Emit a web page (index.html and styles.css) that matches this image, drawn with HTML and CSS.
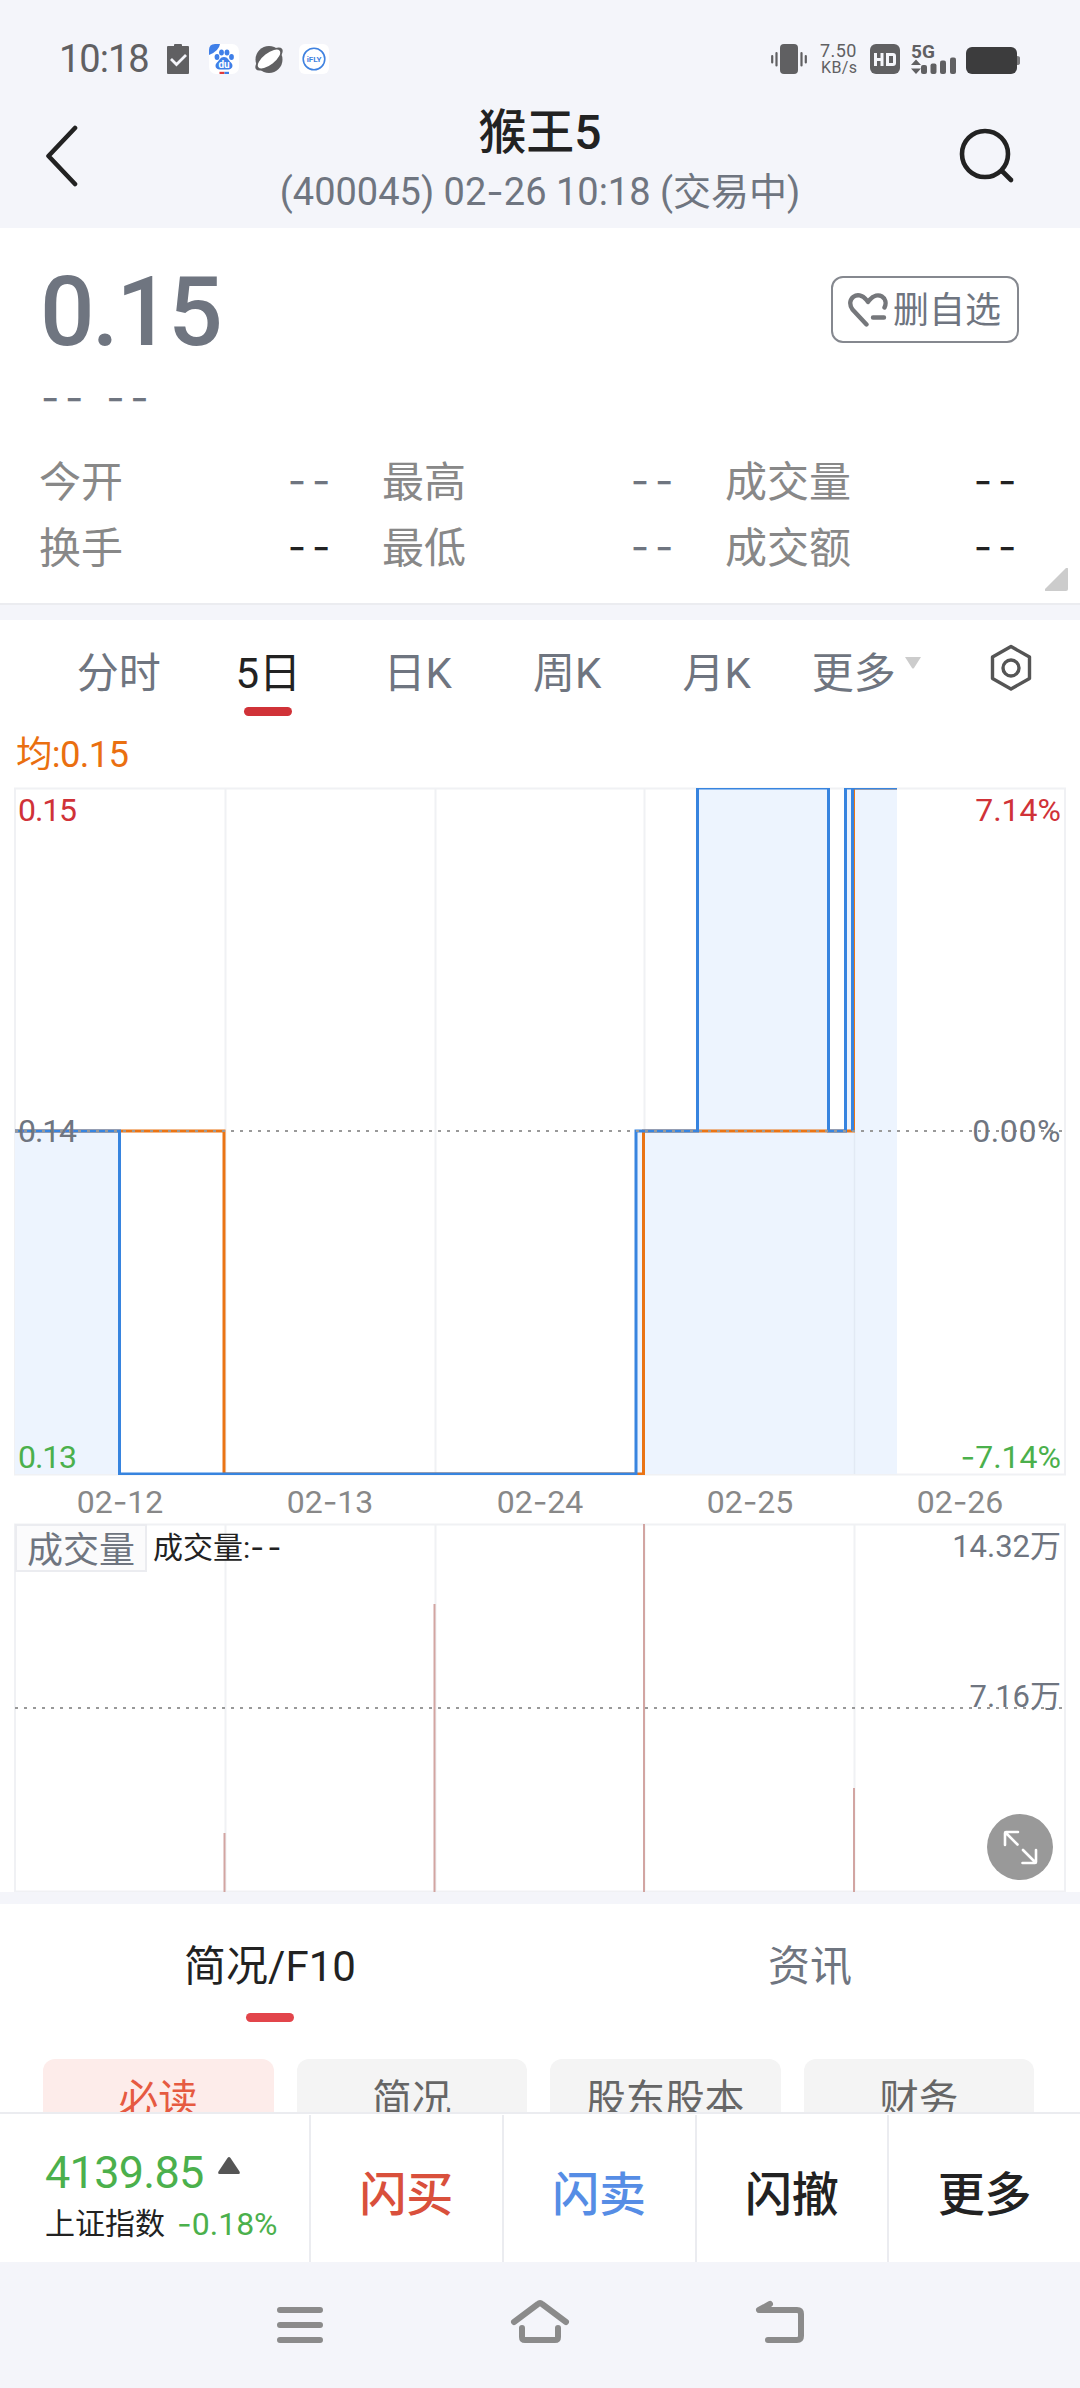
FILE: index.html
```html
<!DOCTYPE html>
<html lang="zh-CN">

<head>
    <meta charset="UTF-8">
    <meta name="viewport" content="width=device-width, initial-scale=1.0">
    <title>猴王5</title>

    <link rel="stylesheet" href="styles.css">
</head>

<body>
    <div class="status-bar">
        <div class="status-left">
            <span class="clock">10:18</span>
            <svg class="status-icon clipboard" viewBox="0 0 22 30">
                <path d="M1 2h6v-1q0-1 1-1h6q1 0 1 1v1h6q1 0 1 1v26q0 1-1 1H1q-1 0-1-1V3q0-1 1-1z" fill="#606062" />
                <path d="M4 15l5.5 5.500L19 11" fill="none" stroke="#f4f5fa" stroke-width="2.800" />
            </svg>
            <svg class="status-icon" viewBox="0 0 30 30">
                <rect width="30" height="30" rx="7" fill="#fff" />
                <path d="M0 11V6q0-6 6-6h5q-1 7-11 11z" fill="#3f7fe8" />
                <g fill="#3f7fe8">
                    <ellipse cx="8" cy="13" rx="2.400" ry="3" />
                    <ellipse cx="12.500" cy="8.500" rx="2.400" ry="3" />
                    <ellipse cx="18" cy="8.500" rx="2.400" ry="3" />
                    <ellipse cx="22.500" cy="13" rx="2.400" ry="3" />
                    <path d="M15 13c4 0 4.500 3.500 7 5.500c3 3 1 7-2.500 7h-9c-3.500 0-5.500-4-2.500-7c2.500-2 3-5.500 7-5.500z" />
                </g>
                <text x="15" y="24" class="du">du</text>
                <path d="M10.500 29h5" stroke="#e03a3a" stroke-width="2.400" />
                <path d="M15.500 29h4.500" stroke="#3f7fe8" stroke-width="2.400" />
            </svg>
            <svg class="status-icon" viewBox="0 0 30 30">
                <circle cx="15" cy="15.500" r="13.500" fill="#606062" />
                <ellipse cx="15" cy="15" rx="16.500" ry="6.800" transform="rotate(-38 15 15)" fill="#606062" />
                <ellipse cx="15" cy="15" rx="13.500" ry="5.800" transform="rotate(-38 15 15)" fill="#fff" />
            </svg>
            <svg class="status-icon" viewBox="0 0 30 30">
                <rect width="30" height="30" rx="6" fill="#fff" />
                <circle cx="15" cy="15" r="10.800" fill="none" stroke="#3f82e0" stroke-width="1.600" />
                <text x="15" y="18" class="ifly">iFLY</text>
            </svg>
        </div>
        <div class="status-right">
            <svg class="vibrate" viewBox="0 0 36 30">
                <rect x="9" width="18" height="30" rx="4" />
                <path d="M1.200 12v6.500M5.500 9v12.500M30.500 9v12.500M34.800 12v6.500" stroke="#606062" stroke-width="2.200" stroke-linecap="round" />
            </svg>
            <span class="speed"><b>7.50</b><i>KB/s</i></span>
            <svg class="hd" viewBox="0 0 30 30">
                <rect width="30" height="30" rx="6" />
                <path d="M5.500 9v13M12 9v13M5.500 15.500h6.500M17.500 10.500h5.500q1.500 0 1.500 1.500v7q0 1.500-1.500 1.500h-5.500z" fill="none" stroke="#f4f5fa" stroke-width="3" />
            </svg>
            <svg class="signal" viewBox="0 0 46 30">
                <text x="0" y="14" class="five-g">5G</text>
                <path d="M5 15.500l5 5.500H0zM5 30l5-5.500H0z" />
                <rect x="10" y="21" width="6" height="9" rx="2" />
                <rect x="19.500" y="19.500" width="6" height="10.500" rx="2" />
                <rect x="29" y="16.500" width="6" height="13.500" rx="2" />
                <rect x="39" y="13.500" width="6" height="16.500" rx="2" />
            </svg>
            <svg class="battery" viewBox="0 0 54 27">
                <path d="M51 9q3 0 3 2v5q0 2-3 2z" fill="#7a7a7c" />
                <rect width="51" height="27" rx="6" fill="#3c3c3d" />
            </svg>
        </div>
    </div>

    <header class="header">
        <svg class="back" viewBox="0 0 34 62">
            <path d="M30 3L3.500 31L30 59" />
        </svg>
        <div class="title">
            <h1>猴王5</h1>
            <p>(400045) 02<span class="hyphen">-</span>26 10:18 (交易中)</p>
        </div>
        <svg class="search" viewBox="0 0 56 56">
            <circle cx="26" cy="26" r="23" />
            <path d="M43.500 43.500L52 52" />
        </svg>
    </header>

    <section class="quote">
        <div class="quote-top">
            <div class="price">0.15</div>
            <button class="unfollow">
                <svg viewBox="0 0 40 36">
                    <path d="M18.500 32.500L4.500 17.500C-3 7 10-3 18.500 8L20 10L21.500 8C30-2 41 6 36.500 15.500M25 25.500H36" />
                </svg>
                <span>删自选</span>
            </button>
        </div>
        <div class="change dashes"><span>--</span><span>--</span></div>
        <dl class="stats">
            <div><dt>今开</dt><dd class="dashes">--</dd></div>
            <div><dt>最高</dt><dd class="dashes">--</dd></div>
            <div><dt>成交量</dt><dd class="dashes dark">--</dd></div>
            <div><dt>换手</dt><dd class="dashes dark">--</dd></div>
            <div><dt>最低</dt><dd class="dashes">--</dd></div>
            <div><dt>成交额</dt><dd class="dashes dark">--</dd></div>
        </dl>
        <svg class="corner" viewBox="0 0 23 23">
            <path d="M21 0q2-1 2 1v20q0 2-2 2H1q-2 0-1-2z" />
        </svg>
    </section>

    <nav class="periods">
        <a>分时</a>
        <a class="active">5日</a>
        <a>日K</a>
        <a>周K</a>
        <a>月K</a>
        <a class="more">更多
            <svg viewBox="0 0 16 12">
                <path d="M0 0h16L9 11q-1 1-2 0z" />
            </svg>
        </a>
        <svg class="settings" viewBox="0 0 44 48">
            <path d="M22 2.500L40.500 13v21.500L22 45L3.500 34.500V13z" />
            <circle cx="22" cy="24" r="8" />
        </svg>
    </nav>

    <p class="average">均:0.15</p>

    <svg class="chart" viewBox="0 0 1080 740">
        <clipPath id="plot">
            <rect x="15" y="8" width="1050" height="687" />
        </clipPath>
        <g class="grid">
            <rect x="15" y="8.500" width="1050" height="686" />
            <path d="M225.500 8v686M435.500 8v686M644.500 8v686M854.500 8v686" />
        </g>
        <g clip-path="url(#plot)">
            <path class="area" d="M15 351H119V694H15zM636 694V351H697V8H829V351H845V8H897V694z" />
            <path class="area-grid" d="M854.500 351v343" />
            <path class="avg-line" d="M15 351H224V694H643.500V351H853.500V8H897" />
            <path class="price-line" d="M15 351H119.500V694H636V351H697.500V8H828.500V351H845.500V8H852.500V351V8H897" />
        </g>
        <path class="dotted" d="M15 351H1065" />
        <text class="label tight up" x="18" y="41">0.15</text>
        <text class="label up end" x="1061" y="41">7.14%</text>
        <text class="label tight" x="18" y="362">0.14</text>
        <text class="label wide end" x="1061" y="362">0.00%</text>
        <text class="label tight down" x="18" y="688">0.13</text>
        <text class="label down end" x="1061" y="688"><tspan class="hyphen">-</tspan>7.14%</text>
        <text class="label date" x="120" y="733">02<tspan class="hyphen">-</tspan>12</text>
        <text class="label date" x="330" y="733">02<tspan class="hyphen">-</tspan>13</text>
        <text class="label date" x="540" y="733">02<tspan class="hyphen">-</tspan>24</text>
        <text class="label date" x="750" y="733">02<tspan class="hyphen">-</tspan>25</text>
        <text class="label date" x="960" y="733">02<tspan class="hyphen">-</tspan>26</text>
    </svg>

    <div class="volume">
        <svg class="chart" viewBox="0 0 1080 372">
            <g class="grid">
                <rect x="15" y="4.500" width="1050" height="367" />
                <path d="M225.500 4v368M435.500 4v368M644.500 4v368M854.500 4v368" />
            </g>
            <path class="dotted" d="M15 188H1065" />
            <path class="bars" d="M224.500 372V313M434.500 372V84M644 372V4M854 372V268" />
            <text class="label amount end" x="1061" y="37">14.32万</text>
            <text class="label amount end" x="1061" y="186.500">7.16万</text>
        </svg>
        <div class="indicator">
            <span class="indicator-name">成交量</span>
            <span class="indicator-value">成交量:<span class="small-dashes">--</span></span>
        </div>
        <svg class="expand" viewBox="0 0 66 66">
            <circle cx="33" cy="33" r="33" />
            <path d="M18 31V19q0-1 1-1H31M19 19L30.500 30.500M36 36L47.500 47.500M35.500 49H48q1 0 1-1V36" />
        </svg>
    </div>

    <section class="info">
        <nav class="info-tabs">
            <a class="active">简况/F10</a>
            <a>资讯</a>
        </nav>
        <div class="chips">
            <span class="selected">必读</span>
            <span>简况</span>
            <span>股东股本</span>
            <span>财务</span>
        </div>
    </section>

    <footer class="actions">
        <div class="index">
            <div class="index-value">4139.85
                <svg viewBox="0 0 22 17">
                    <path d="M9.500 1q1.500-2 3 0L21.500 14.500q1 2.500-1 2.500h-19q-2 0-1-2.500z" />
                </svg>
            </div>
            <div class="index-name"><span>上证指数</span><em><span class="hyphen">-</span>0.18%</em></div>
        </div>
        <a class="buy">闪买</a>
        <a class="sell">闪卖</a>
        <a>闪撤</a>
        <a>更多</a>
    </footer>

    <div class="system-nav">
        <svg viewBox="0 0 60 50">
            <path d="M10 13H50M10 28H50M10 43H50" />
        </svg>
        <svg viewBox="0 0 60 50">
            <path d="M4 25L28 7q2-2 4 0L56 25M12 31v9q0 3 3 3h30q3 0 3-3v-9" />
        </svg>
        <svg viewBox="0 0 60 50">
            <path d="M20 7L9 13H47q4 0 4 4V39q0 4-4 4H18" />
        </svg>
    </div>
</body>

</html>
```
FILE: styles.css
```css
* {
    --ink: #222;
    --slate: #6f7580;
    --page: #f4f5fa;
    --line: #ebecf0;
    --red: #d03238;
    --green: #4bb04c;

    box-sizing: border-box;
}

body {
    background-color: var(--page);
    color: var(--slate);
    font-family: Roboto, "Noto Sans CJK SC", sans-serif;
    height: 2388px;
    margin: 0;
    overflow: hidden;
    width: 1080px;
}

h1,
p,
dl,
dd {
    margin: 0;
}

svg {
    display: block;
    flex: none;
}

.status-bar {
    display: flex;
    height: 104px;
    justify-content: space-between;
    padding: 44px 60px 0 59px;
}

.status-left,
.status-right {
    align-items: center;
    color: #606062;
    display: flex;
    height: 30px;
}

.status-left {
    gap: 15px;
}

.clock {
    font-size: 38px;
    letter-spacing: -1px;
    width: 93px;
}

.status-icon {
    height: 30px;
    width: 30px;
}

.clipboard {
    margin-right: 5px;
    width: 22px;
}

.du {
    fill: #fff;
    font-size: 10px;
    font-weight: 700;
    text-anchor: middle;
}

.ifly {
    fill: #3f82e0;
    font-size: 8px;
    font-weight: 700;
    text-anchor: middle;
}

.status-right {
    fill: #606062;
}

.vibrate {
    height: 30px;
    width: 36px;
}

.speed {
    display: flex;
    flex-direction: column;
    margin-left: 13px;
    width: 37px;
}

.speed b,
.speed i {
    font-style: normal;
    font-weight: 400;
    line-height: 15px;
}

.speed b {
    font-size: 18px;
    letter-spacing: 0.4px;
}

.speed i {
    font-size: 16px;
    letter-spacing: 0.4px;
    margin-top: 2px;
    padding-left: 1px;
}

.hd {
    height: 30px;
    margin-left: 13px;
    width: 30px;
}

.signal {
    height: 30px;
    margin-left: 11px;
    overflow: visible;
    width: 46px;
}

.five-g {
    font-size: 19px;
    font-weight: 700;
}

.battery {
    height: 27px;
    margin: 3px 0 0 9px;
    width: 54px;
}

.header {
    align-items: flex-start;
    display: grid;
    grid-template-columns: 120px 1fr 120px;
    height: 124px;
}

.back,
.search {
    fill: none;
    stroke: var(--ink);
    stroke-linecap: round;
    stroke-linejoin: round;
    stroke-width: 4.6px;
}

.back {
    height: 62px;
    margin: 21px 0 0 45px;
    width: 34px;
}

.search {
    height: 56px;
    margin: 24px 65px 0 0;
    justify-self: end;
    width: 56px;
}

.title {
    padding-top: 1px;
    text-align: center;
}

.title h1 {
    color: var(--ink);
    font-size: 48px;
    font-weight: 500;
    line-height: 56px;
}

.title p {
    font-size: 38px;
    line-height: 61px;
    white-space: nowrap;
}

.hyphen {
    font-family: Inter, sans-serif;
}

.quote {
    background-color: white;
    border-bottom: 2px solid var(--line);
    height: 377px;
    padding: 48px 61px 0 40px;
    position: relative;
}

.quote-top {
    display: flex;
    height: 97px;
    justify-content: space-between;
}

.price {
    font-size: 96px;
    font-weight: 500;
    letter-spacing: -2.5px;
    line-height: 73px;
}

.unfollow {
    align-items: center;
    background: none;
    border: 2px solid #85888f;
    border-radius: 12px;
    color: inherit;
    display: flex;
    font: 36px "Noto Sans CJK SC", sans-serif;
    gap: 5px;
    height: 67px;
    padding: 0 0 0 15px;
    width: 188px;
}

.unfollow span {
    margin-top: -6px;
}

.unfollow svg {
    fill: none;
    height: 36px;
    stroke: #75777b;
    stroke-linecap: round;
    stroke-linejoin: round;
    stroke-width: 4.4px;
    width: 40px;
}

.dashes {
    font: 40px/50px Inter, sans-serif;
    letter-spacing: 5.7px;
}

.change {
    display: flex;
    gap: 17px;
    padding-left: 1px;
}

.stats {
    column-gap: 53px;
    display: grid;
    font-size: 42px;
    grid-template-columns: repeat(3, 290px);
    line-height: 66px;
    margin-top: 27px;
    margin-left: -1px;
}

.stats div {
    display: flex;
    justify-content: space-between;
}

.stats dt {
    color: #888;
}

.stats dd {
    height: 66px;
    line-height: 61px;
    margin-right: -7px;
}

.stats .dark {
    color: var(--ink);
}

.corner {
    bottom: 12px;
    fill: #ccc;
    height: 23px;
    position: absolute;
    right: 12px;
    width: 23px;
}

.periods {
    background-color: white;
    display: flex;
    font-size: 42px;
    height: 115px;
    line-height: 107px;
    margin-top: 15px;
    padding-left: 44px;
}

.periods a {
    display: flex;
    justify-content: center;
    width: 149.5px;
}

.periods .active,
.info-tabs .active {
    color: var(--ink);
    position: relative;
}

.periods .active::after,
.info-tabs .active::after {
    background-color: var(--red);
    border-radius: 5px;
    content: "";
    height: 9px;
    left: calc(50% - 24px);
    position: absolute;
    top: 87px;
    width: 48px;
}

.more svg {
    fill: #ccc;
    height: 12px;
    margin: 37px 0 0 9px;
    width: 16px;
}

.settings {
    fill: none;
    height: 48px;
    margin: 24px 0 0 48px;
    stroke: #555;
    stroke-linejoin: round;
    stroke-width: 3.4px;
    width: 44px;
}

.average {
    background-color: white;
    color: #ea6f10;
    font-size: 36.5px;
    height: 45px;
    letter-spacing: -0.7px;
    line-height: 40px;
    padding-left: 16px;
}

.chart {
    background-color: white;
    width: 1080px;
}

.grid {
    fill: none;
    stroke: #f0f1f4;
    stroke-width: 2px;
}

.area {
    fill: #edf4fe;
}

.area-grid {
    stroke: #e2e9f4;
    stroke-width: 1.5px;
}

.price-line,
.avg-line {
    fill: none;
    stroke: #3784df;
    stroke-width: 3px;
}

.avg-line {
    stroke: #ea7414;
}

.dotted {
    stroke: #999;
    stroke-dasharray: 3 6;
    stroke-width: 2px;
}

.label {
    fill: var(--slate);
    font-size: 32px;
}

.tight {
    letter-spacing: -1.1px;
}

.wide {
    letter-spacing: 0.6px;
}

.amount {
    font-size: 31px;
}

.up {
    fill: var(--red);
}

.down {
    fill: var(--green);
}

.end {
    text-anchor: end;
}

.date {
    fill: #888;
    text-anchor: middle;
}

.volume {
    position: relative;
}

.bars {
    stroke: #d2a5a2;
    stroke-width: 2px;
}

.indicator {
    display: flex;
    gap: 6px;
    left: 15px;
    position: absolute;
    top: 4px;
}

.indicator-name {
    background-color: #fbfbfc;
    border: 2px solid var(--line);
    font-size: 36px;
    height: 48px;
    line-height: 50px;
    text-align: center;
    width: 132px;
}

.indicator-value {
    color: var(--ink);
    font-size: 30px;
    line-height: 47px;
}

.small-dashes {
    font-family: Inter, sans-serif;
    letter-spacing: 3.5px;
}

.expand {
    bottom: 12px;
    fill: #999;
    height: 66px;
    position: absolute;
    right: 27px;
    width: 66px;
}

.expand path {
    fill: none;
    stroke: white;
    stroke-linecap: round;
    stroke-width: 2.6px;
}

.info {
    background-color: white;
    height: 208px;
    margin-top: 12px;
    overflow: hidden;
}

.info-tabs {
    display: grid;
    font-size: 42px;
    grid-template-columns: 1fr 1fr;
    height: 155px;
    line-height: 126px;
    text-align: center;
}

.info-tabs .active::after {
    background-color: #e2454b;
    top: 109px;
}

.chips {
    display: grid;
    gap: 23px;
    grid-template-columns: repeat(4, 1fr);
    padding: 0 46px 0 43px;
}

.chips span {
    background-color: #f4f4f4;
    border-radius: 12px;
    color: #666;
    font-size: 39.5px;
    height: 80px;
    line-height: 81px;
    text-align: center;
}

.chips .selected {
    background-color: #fdecea;
    color: #e65a41;
}

.actions {
    background-color: white;
    border-top: 2px solid var(--line);
    color: var(--ink);
    display: grid;
    grid-template-columns: 309px repeat(4, 1fr);
    grid-template-rows: 148px;
    height: 150px;
}

.actions a {
    border-left: 2px solid var(--line);
    font-size: 47px;
    font-weight: 500;
    line-height: 160px;
    margin-top: 1px;
    text-align: center;
}

.actions .buy {
    color: #d9503c;
}

.actions .sell {
    color: #568de5;
}

.index {
    padding: 33px 0 0 45px;
}

.index-value {
    color: var(--green);
    display: flex;
    font-size: 45px;
    letter-spacing: -0.7px;
    line-height: 52px;
}

.index-value svg {
    fill: #555;
    height: 17px;
    margin: 10px 0 0 14px;
    width: 22px;
}

.index-name {
    display: flex;
    font-size: 30px;
    gap: 12px;
    line-height: 49px;
}

.index-name em {
    color: var(--green);
    font-size: 32px;
    font-style: normal;
}

.system-nav {
    display: flex;
    gap: 180px;
    justify-content: center;
    padding-top: 35px;
}

.system-nav svg {
    fill: none;
    height: 50px;
    stroke: #8b8b8b;
    stroke-linecap: round;
    stroke-linejoin: round;
    stroke-width: 6px;
    width: 60px;
}
```
